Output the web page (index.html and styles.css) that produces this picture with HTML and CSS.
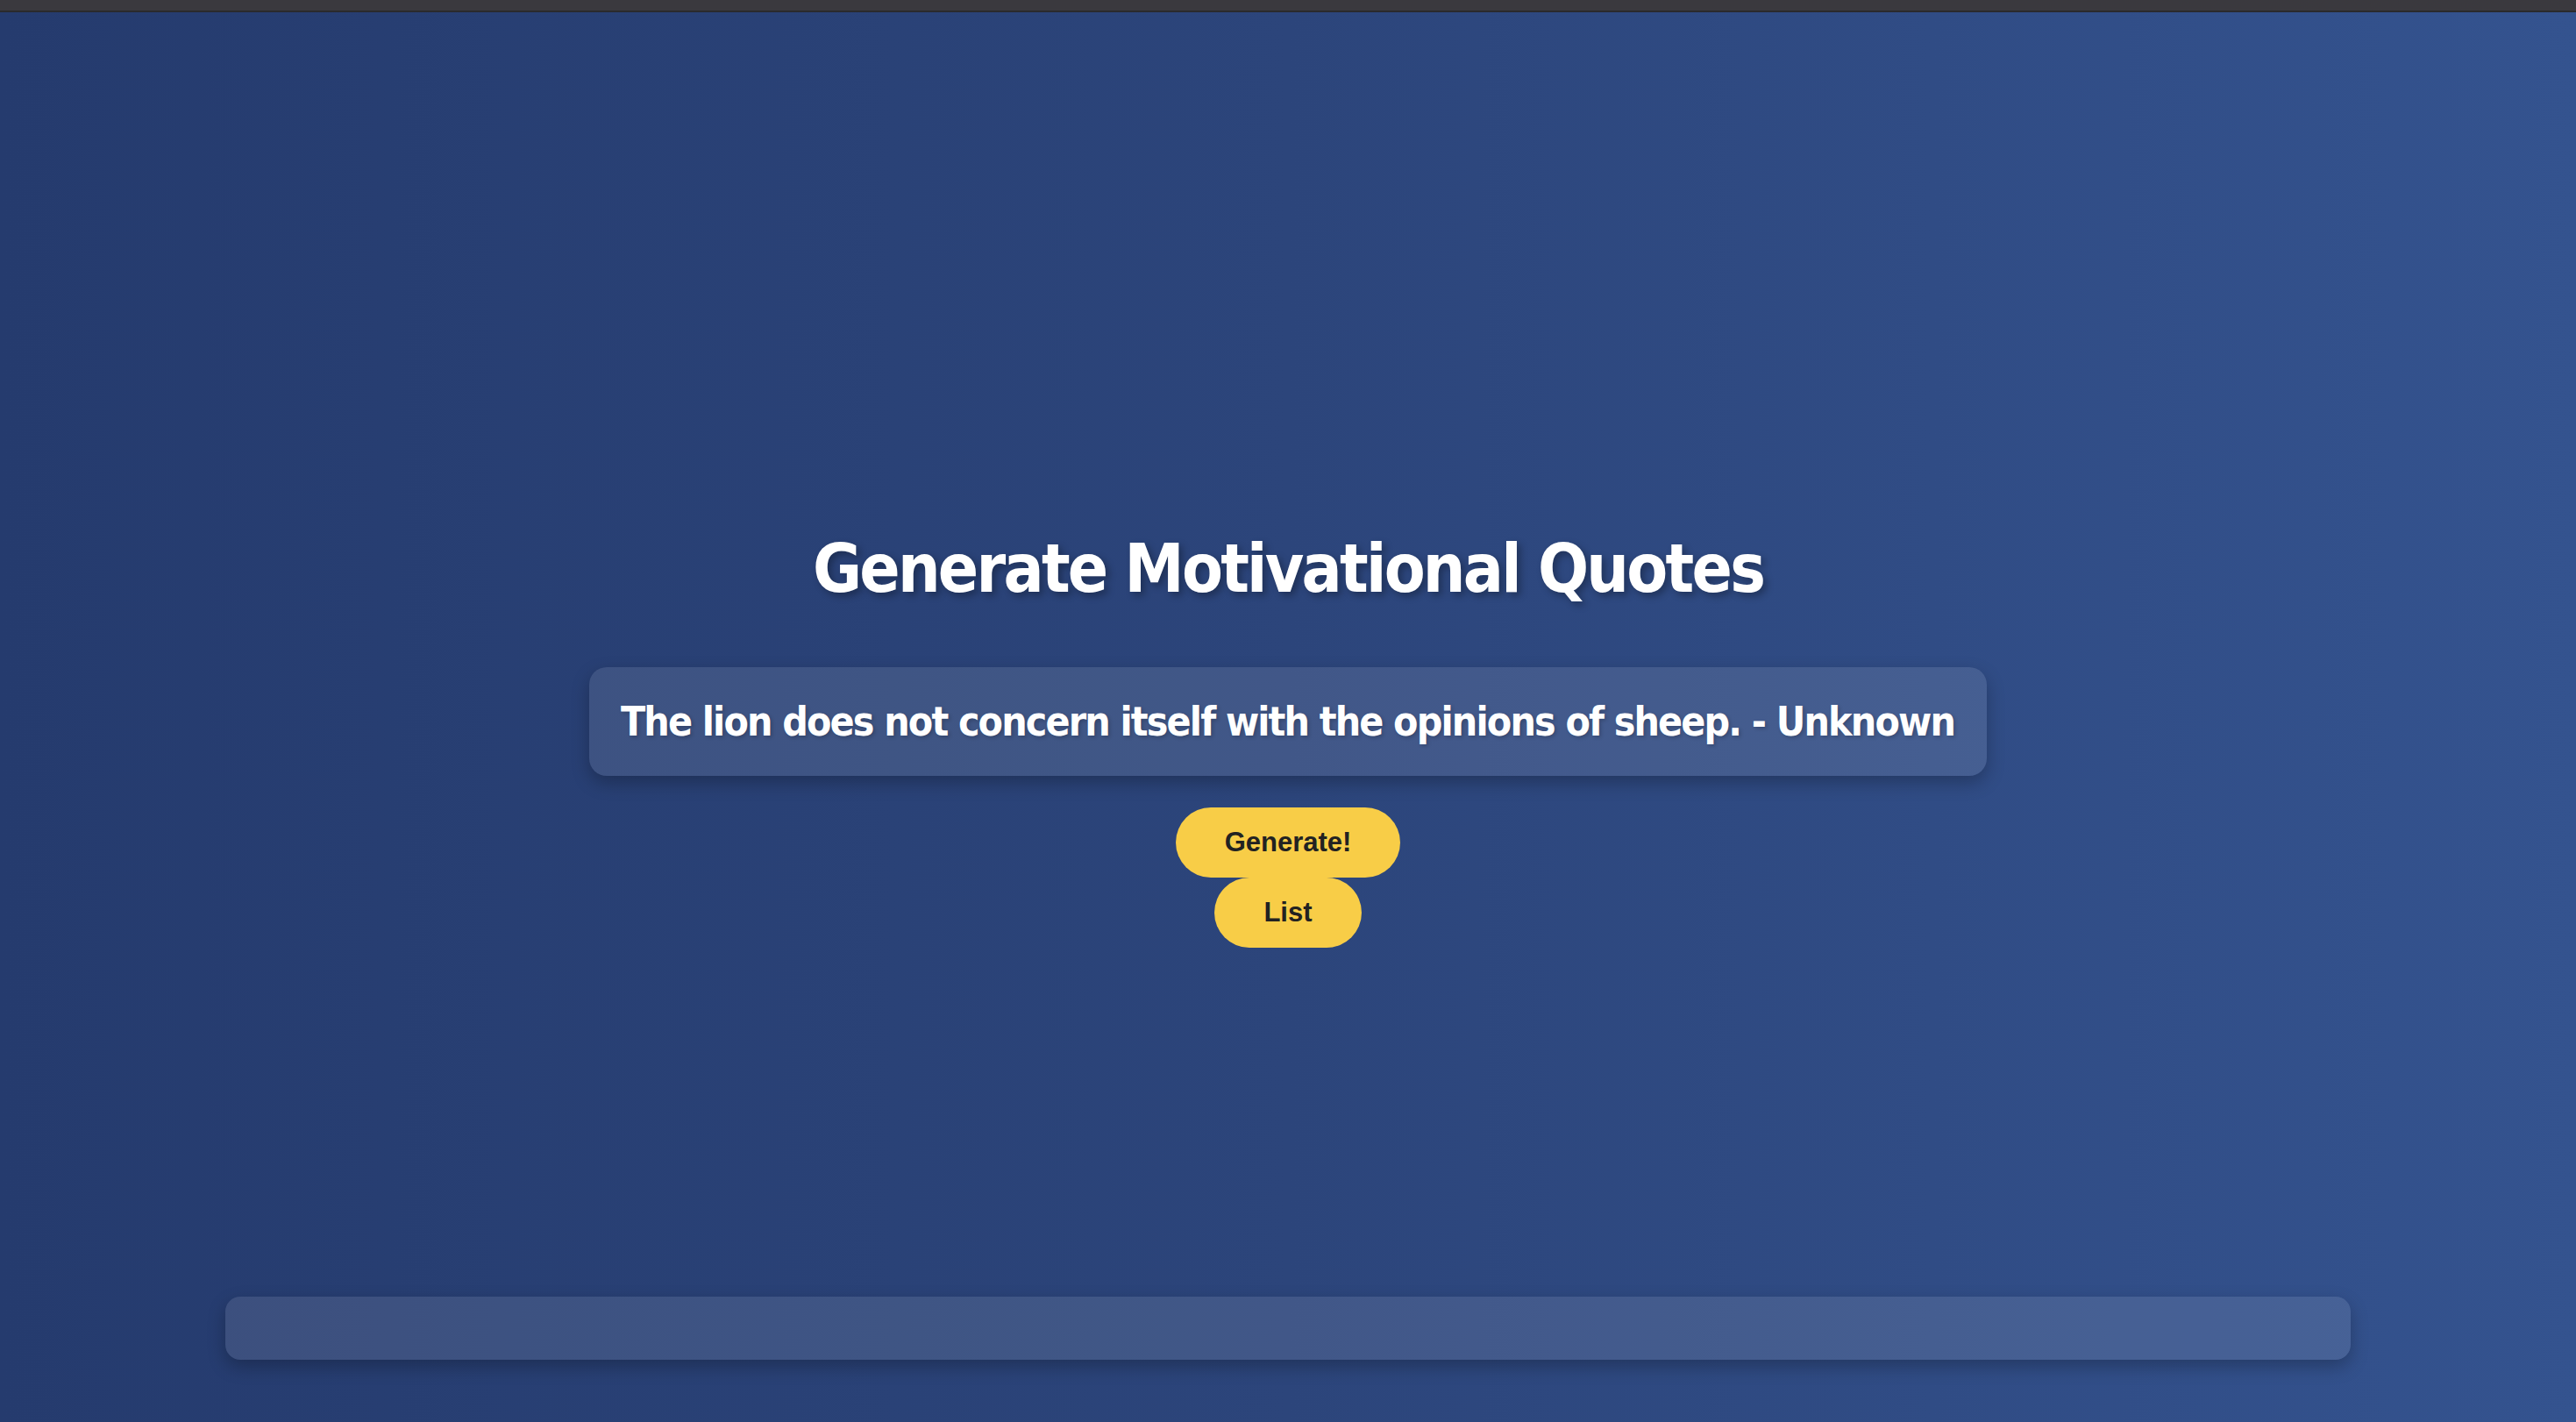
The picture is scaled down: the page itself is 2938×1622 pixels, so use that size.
FILE: index.html
```html
<!DOCTYPE html>
<html lang="en">
<head>
<meta charset="utf-8">
<title>Generate Motivational Quotes</title>
<link rel="stylesheet" href="styles.css">
</head>
<body>
<div class="topstrip"></div>
<main class="main">
  <h1 class="title">Generate Motivational Quotes</h1>
  <div class="quote">The lion does not concern itself with the opinions of sheep. - Unknown</div>
  <div class="actions">
    <button class="btn" type="button">Generate!</button>
    <button class="btn" type="button">List</button>
  </div>
</main>
<footer class="footer"></footer>
</body>
</html>
```
FILE: styles.css
```css
html, body {
  margin: 0;
  padding: 0;
  height: 100%;
}
body {
  display: flex;
  flex-direction: column;
  background: linear-gradient(to right, #253b6e 0%, #2c457b 50%, #34538f 100%);
  font-family: "DejaVu Sans Condensed", "DejaVu Sans", sans-serif;
  color: #ffffff;
  overflow: hidden;
}
.topstrip {
  height: 12px;
  background: #3a393e;
  border-bottom: 2px solid #2a2a2d;
  flex: none;
}
.main {
  flex: 1;
  display: flex;
  flex-direction: column;
  align-items: center;
  justify-content: flex-start;
  padding-top: 591px;
}
.title {
  margin: 0 0 68px;
  font-size: 76px;
  font-weight: bold;
  line-height: 88px;
  letter-spacing: -0.036em;
  text-shadow: 4px 4px 8px rgba(0, 0, 0, 0.3);
}
.quote {
  background: rgba(255, 255, 255, 0.1);
  border-radius: 20px;
  padding: 36px 37px 36px 36px;
  font-size: 46px;
  font-weight: bold;
  line-height: 52px;
  letter-spacing: -0.04em;
  text-shadow: 2px 2px 4px rgba(0, 0, 0, 0.2);
  box-shadow: 0 8px 20px rgba(0, 0, 0, 0.25);
}
.actions {
  margin-top: 36px;
  display: flex;
  flex-direction: column;
  align-items: center;
}
.btn {
  display: block;
  border: none;
  border-radius: 40px;
  background: #f8cd47;
  color: #222222;
  font-family: "Liberation Sans", Arial, sans-serif;
  font-weight: bold;
  font-size: 31px;
  line-height: 36px;
  padding: 22px 56px;
  cursor: pointer;
}
.footer {
  flex: none;
  width: 2424px;
  height: 72px;
  margin: 0 auto 71px;
  background: rgba(255, 255, 255, 0.1);
  border-radius: 17px;
  box-shadow: 0 8px 20px rgba(0, 0, 0, 0.25);
}
```
